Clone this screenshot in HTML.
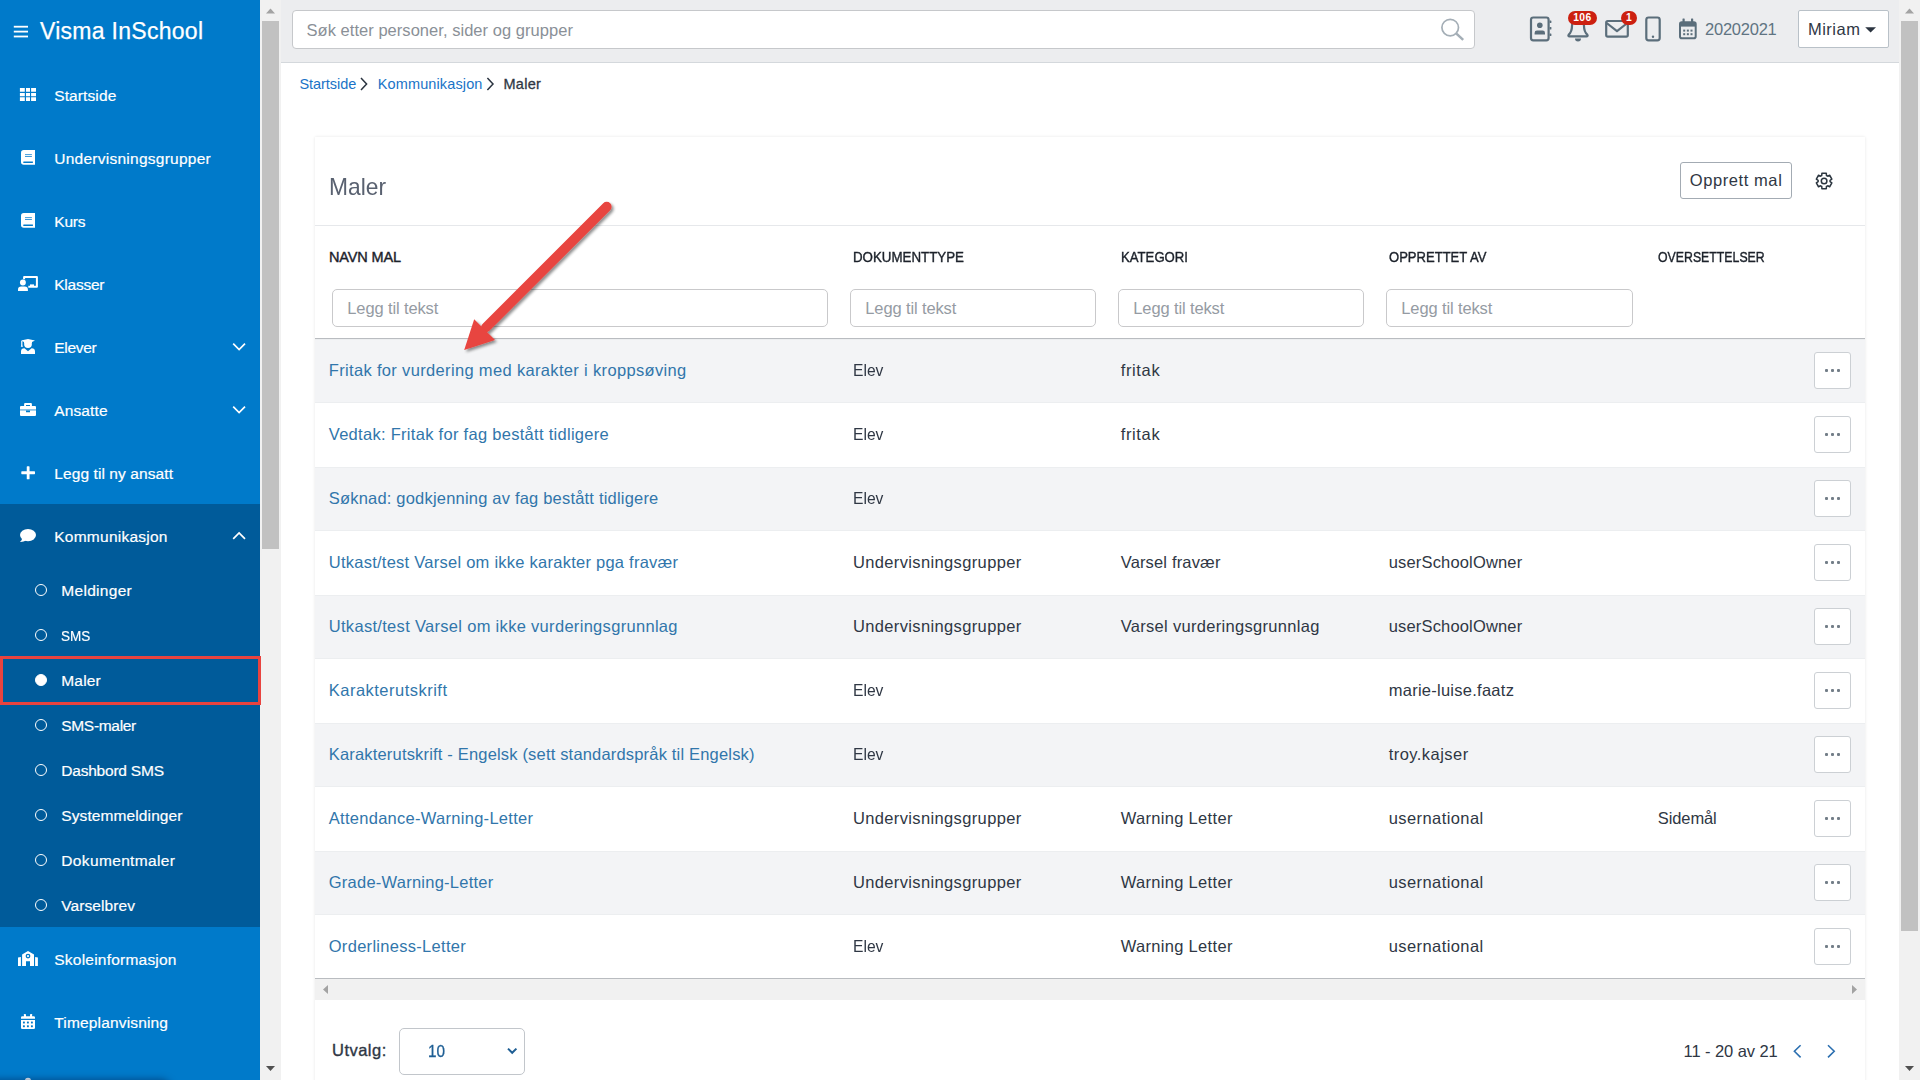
<!DOCTYPE html>
<html><head><meta charset="utf-8"><title>Maler</title>
<style>
*{box-sizing:border-box;margin:0;padding:0}
html,body{width:1920px;height:1080px;overflow:hidden;background:#fff;font-family:"Liberation Sans",sans-serif;color:#282f3a}
.t{position:absolute;white-space:pre;font-family:"Liberation Sans",sans-serif}
.a{position:absolute}
#side{position:absolute;left:0;top:0;width:260px;height:1080px;background:#007aca}
#dark{position:absolute;left:0;top:504px;width:260px;height:423px;background:#005b9a}
#hl{z-index:5;position:absolute;left:0;top:656px;width:261px;height:49px;border:3px solid #e8433f}
.dot{position:absolute;left:35.3px;width:12px;height:12px;border:1.9px solid #fff;border-radius:50%}
.track{position:absolute;background:#f1f1f1}
.thumb{position:absolute;background:#c1c1c1}
#top{position:absolute;left:281px;top:0;width:1618px;height:63px;background:#ecedef;border-bottom:1px solid #d4d8dc}
#search{position:absolute;left:292px;top:10px;width:1183px;height:38.5px;background:#fff;border:1px solid #c6c8cb;border-radius:4px}
#user{position:absolute;left:1797.5px;top:10px;width:91.5px;height:37.5px;background:#fff;border:1px solid #b9c1c8;border-radius:2px}
.badge{position:absolute;top:10.5px;height:14.5px;background:#cc2010;border-radius:8px}
#card{position:absolute;left:315px;top:137px;width:1550px;height:960px;background:#fff;box-shadow:0 0 3px rgba(0,0,0,.10)}
#hdiv{position:absolute;left:315px;top:225px;width:1550px;height:1px;background:#e6e8eb}
#thb{position:absolute;left:315px;top:338px;width:1550px;height:1px;background:#b9bcc0}
#tbb{position:absolute;left:315px;top:978px;width:1550px;height:1px;background:#b9bcc0}
.fi{position:absolute;top:289px;height:38px;border:1px solid #c9c9cb;border-radius:5px;background:#fff}
.row{position:absolute;left:315px;width:1550px;height:64px}
.g{background:#f3f4f6;border-top:1px solid #eceef0;border-bottom:1px solid #eceef0}
.btn{position:absolute;left:1814px;width:37px;height:37px;border:1px solid #ccd0d4;border-radius:3px;background:#fff}
.btn i{position:absolute;top:16.1px;width:3.1px;height:3.1px;background:#737e88;border-radius:1px}
#crt{position:absolute;left:1680px;top:162px;width:112px;height:37px;border:1px solid #a3abb3;border-radius:3px;background:#fff}
#sel{position:absolute;left:399px;top:1028px;width:126px;height:47px;border:1px solid #c2c6cb;border-radius:5px;background:#fff}
#wrap{position:relative;width:1920px;height:1080px;overflow:hidden;background:#fff}
</style></head><body><div id="wrap">
<div id="side"></div><div id="dark"></div><div id="hl"></div>
<svg class="a" style="left:0;top:0" width="260" height="1080"><rect x="13.8" y="25.8" width="14.2" height="1.8" fill="#fff"/><rect x="13.8" y="30.700000000000003" width="14.2" height="1.8" fill="#fff"/><rect x="13.8" y="35.6" width="14.2" height="1.8" fill="#fff"/><rect x="19.9" y="88" width="4.9" height="3.75" fill="#fff"/><rect x="19.9" y="93" width="4.9" height="3.25" fill="#fff"/><rect x="19.9" y="97.25" width="4.9" height="3.75" fill="#fff"/><rect x="26" y="88" width="4" height="3.75" fill="#fff"/><rect x="26" y="93" width="4" height="3.25" fill="#fff"/><rect x="26" y="97.25" width="4" height="3.75" fill="#fff"/><rect x="31.1" y="88" width="4.9" height="3.75" fill="#fff"/><rect x="31.1" y="93" width="4.9" height="3.25" fill="#fff"/><rect x="31.1" y="97.25" width="4.9" height="3.75" fill="#fff"/><path d="M23.8 150.1 H35 V164.79999999999998 H23.8 A2.8 2.8 0 0 1 21 162.0 V152.9 A2.8 2.8 0 0 1 23.8 150.1 Z" fill="#fff"/><rect x="25" y="154.2" width="6.9" height="0.9" fill="#2a8fd6"/><rect x="25" y="156.1" width="6.9" height="0.9" fill="#2a8fd6"/><path d="M23.9 161.4 H32.9 V163.0 H23.9 A0.8 0.8 0 0 1 23.9 161.4Z" fill="#007aca"/><path d="M23.8 213.1 H35 V227.79999999999998 H23.8 A2.8 2.8 0 0 1 21 225.0 V215.9 A2.8 2.8 0 0 1 23.8 213.1 Z" fill="#fff"/><rect x="25" y="217.2" width="6.9" height="0.9" fill="#2a8fd6"/><rect x="25" y="219.1" width="6.9" height="0.9" fill="#2a8fd6"/><path d="M23.9 224.4 H32.9 V226.0 H23.9 A0.8 0.8 0 0 1 23.9 224.4Z" fill="#007aca"/><path d="M24.1 279.2 V277.1 H36.9 V286.8 H28.3" fill="none" stroke="#fff" stroke-width="2" stroke-linejoin="round"/><rect x="30" y="284.4" width="4" height="2" fill="#fff"/><circle cx="22.9" cy="282.5" r="2.95" fill="#fff"/><path d="M18 290.9 V289.6 A3.2 3.2 0 0 1 21.2 286.4 H24.7 A3.2 3.2 0 0 1 27.9 289.6 V290.9 Z" fill="#fff"/><path d="M28 339 L35 340.6 L32 342 V343 H24 V342 L21 340.6 Z" fill="#fff"/><circle cx="28" cy="344" r="3.9" fill="#fff"/><path d="M21.2 341 H22.4 V345.2 L23 346.8 H20.8 L21.2 345.2Z" fill="#fff"/><path d="M21 354 V351.5 A3.4 3.4 0 0 1 24.4 348.2 L28 351.2 L31.6 348.2 A3.4 3.4 0 0 1 35 351.5 V354 Z" fill="#fff"/><path d="M20 407 A1 1 0 0 1 21 406 H24.1 V404.1 A1 1 0 0 1 25.1 403.1 H30.9 A1 1 0 0 1 31.9 404.1 V406 H35 A1 1 0 0 1 36 407 V409.2 H20 Z M26 406 H30 V405 H26 Z" fill="#fff" fill-rule="evenodd"/><rect x="20" y="409.2" width="16" height="1.4" fill="#fff" opacity=".5"/><path d="M20 410.6 H26 V412.2 H30 V410.6 H36 V414.9 A1 1 0 0 1 35 415.9 H21 A1 1 0 0 1 20 414.9 Z" fill="#fff"/><rect x="21.3" y="471.35" width="13.7" height="2.8" rx=".6" fill="#fff"/><rect x="26.75" y="466.3" width="2.8" height="13" rx=".6" fill="#fff"/><ellipse cx="28" cy="535.1" rx="8" ry="6.1" fill="#fff"/><path d="M22.2 538 C22 540 21 541.3 19.9 541.9 C22.5 542 24.5 541.3 26 540.3 Z" fill="#fff"/><path d="M233.2 343.7 L239.1 349.6 L245 343.7" fill="none" stroke="#fff" stroke-width="1.7"/><path d="M233.2 406.7 L239.1 412.6 L245 406.7" fill="none" stroke="#fff" stroke-width="1.7"/><path d="M233.2 538.8 L239.1 532.9 L245 538.8" fill="none" stroke="#fff" stroke-width="1.7"/><path d="M18 957.6 L20.9 957.1 V966 H18 Z" fill="#fff"/><path d="M37.9 957.6 L35.1 957.1 V966 H37.9 Z" fill="#fff"/><path d="M28 951 L34 954.6 V966 H30 V961.3 H26 V966 H22.1 V954.6 Z" fill="#fff"/><circle cx="28" cy="956.1" r="1.75" fill="#fff" stroke="#007aca" stroke-width="1.3"/><rect x="23.9" y="1014.1" width="2.1" height="3" rx=".4" fill="#fff"/><rect x="30" y="1014.1" width="2.1" height="3" rx=".4" fill="#fff"/><path d="M21 1018.8 V1017.5 A1.3 1.3 0 0 1 22.3 1016.2 H33.7 A1.3 1.3 0 0 1 35 1017.5 V1018.8 Z" fill="#fff"/><path d="M21 1020 H35 V1027.7 A1.3 1.3 0 0 1 33.7 1029 H22.3 A1.3 1.3 0 0 1 21 1027.7 Z" fill="#fff"/><rect x="22.95" y="1021.55" width="1.9" height="1.9" rx=".4" fill="#007aca"/><rect x="22.95" y="1025.35" width="1.9" height="1.9" rx=".4" fill="#007aca"/><rect x="26.95" y="1021.55" width="1.9" height="1.9" rx=".4" fill="#007aca"/><rect x="26.95" y="1025.35" width="1.9" height="1.9" rx=".4" fill="#007aca"/><rect x="30.95" y="1021.55" width="1.9" height="1.9" rx=".4" fill="#007aca"/><rect x="30.95" y="1025.35" width="1.9" height="1.9" rx=".4" fill="#007aca"/><circle cx="28" cy="1081" r="3.2" fill="#fff"/></svg>
<div class="a" style="left:0;top:0;width:260px;height:1080px;overflow:hidden"><div class="a" style="left:-20px;top:1081px;width:190px;height:12px;border-radius:0 10px 0 0;box-shadow:0 0 7px 2px rgba(0,40,90,.55)"></div></div>
<!-- sub dots -->
<div class="dot" style="top:583.5px"></div><div class="dot" style="top:628.5px"></div>
<div class="dot" style="top:673.5px;background:#fff"></div><div class="dot" style="top:718.5px"></div>
<div class="dot" style="top:763.5px"></div><div class="dot" style="top:808.5px"></div>
<div class="dot" style="top:853.5px"></div><div class="dot" style="top:898.5px"></div>
<!-- scrollbars -->
<div class="track" style="left:260px;top:0;width:21px;height:1080px"></div>
<div class="thumb" style="left:262px;top:21px;width:17px;height:528px"></div>
<div class="track" style="left:1899px;top:0;width:21px;height:1080px"></div>
<div class="thumb" style="left:1901px;top:21px;width:17px;height:910px"></div>
<svg class="a" style="left:260px;top:0" width="21" height="1080"><path d="M6 13.5h9l-4.5-5z" fill="#a3a3a3"/><path d="M6 1066h9l-4.5 5z" fill="#505050"/></svg>
<svg class="a" style="left:1899px;top:0" width="21" height="1080"><path d="M6 13.5h9l-4.5-5z" fill="#a3a3a3"/><path d="M6 1066h9l-4.5 5z" fill="#505050"/></svg>
<div id="top"></div><div id="search"></div><div id="user"></div>
<div id="card"></div><div id="hdiv"></div>
<div id="crt"></div>
<!-- rows -->
<div class="row g" style="top:338.5px"></div><div class="row g" style="top:466.5px"></div><div class="row g" style="top:594.5px"></div><div class="row g" style="top:722.5px"></div><div class="row g" style="top:850.5px"></div>
<div id="thb"></div><div id="tbb"></div>
<div class="track" style="left:315px;top:979px;width:1550px;height:21px"></div>
<svg class="a" style="left:315px;top:979px" width="1550" height="21"><path d="M13 6v9l-5-4.5z" fill="#a3a3a3"/><path d="M1537 6v9l5-4.5z" fill="#a3a3a3"/></svg>
<div class="fi" style="left:332px;width:496px"></div><div class="fi" style="left:850px;width:246px"></div><div class="fi" style="left:1118px;width:246px"></div><div class="fi" style="left:1386px;width:247px"></div>
<div class="btn" style="top:352px"><i style="left:9.5px"></i><i style="left:15.5px"></i><i style="left:21.5px"></i></div>
<div class="btn" style="top:416px"><i style="left:9.5px"></i><i style="left:15.5px"></i><i style="left:21.5px"></i></div>
<div class="btn" style="top:480px"><i style="left:9.5px"></i><i style="left:15.5px"></i><i style="left:21.5px"></i></div>
<div class="btn" style="top:544px"><i style="left:9.5px"></i><i style="left:15.5px"></i><i style="left:21.5px"></i></div>
<div class="btn" style="top:608px"><i style="left:9.5px"></i><i style="left:15.5px"></i><i style="left:21.5px"></i></div>
<div class="btn" style="top:672px"><i style="left:9.5px"></i><i style="left:15.5px"></i><i style="left:21.5px"></i></div>
<div class="btn" style="top:736px"><i style="left:9.5px"></i><i style="left:15.5px"></i><i style="left:21.5px"></i></div>
<div class="btn" style="top:800px"><i style="left:9.5px"></i><i style="left:15.5px"></i><i style="left:21.5px"></i></div>
<div class="btn" style="top:864px"><i style="left:9.5px"></i><i style="left:15.5px"></i><i style="left:21.5px"></i></div>
<div class="btn" style="top:928px"><i style="left:9.5px"></i><i style="left:15.5px"></i><i style="left:21.5px"></i></div>

<div id="sel"></div>
<svg class="a" style="left:0;top:0" width="1920" height="100"><rect x="1531" y="17.5" width="17.6" height="22.8" rx="2.3" fill="none" stroke="#5b6e7b" stroke-width="2.2"/><rect x="1549.6" y="20.4" width="1.8" height="2.6" rx=".6" fill="#5b6e7b"/><rect x="1549.6" y="26.9" width="1.8" height="2.6" rx=".6" fill="#5b6e7b"/><rect x="1549.6" y="33.4" width="1.8" height="2.6" rx=".6" fill="#5b6e7b"/><circle cx="1539.8" cy="25.3" r="2.8" fill="#5b6e7b"/><path d="M1534.6 34.6 V33 A2.4 2.4 0 0 1 1537 30.6 H1542.6 A2.4 2.4 0 0 1 1545 33 V34.6 Z" fill="#5b6e7b"/><path d="M1578 18.2 C1573.4 18.2 1572 22 1572 26 C1572 31 1570 33.5 1568.6 34.8 C1568 35.6 1568.6 36.4 1569.4 36.4 H1586.6 C1587.4 36.4 1588 35.6 1587.4 34.8 C1586 33.5 1584 31 1584 26 C1584 22 1582.6 18.2 1578 18.2 Z" fill="none" stroke="#5b6e7b" stroke-width="2.2" stroke-linejoin="round"/><path d="M1575 38.6 H1581 A3 3 0 0 1 1575 38.6Z" fill="#5b6e7b"/><rect x="1606.2" y="21" width="21.6" height="15.6" rx="1.6" fill="none" stroke="#5b6e7b" stroke-width="2.2"/><path d="M1606.6 23 L1617 31.2 L1627.4 23" fill="none" stroke="#5b6e7b" stroke-width="2.2" stroke-linejoin="round"/><rect x="1646.3" y="17.5" width="13.4" height="22.8" rx="2.3" fill="none" stroke="#5b6e7b" stroke-width="2.2"/><circle cx="1653" cy="36.7" r="1.2" fill="#5b6e7b"/><rect x="1682.5" y="18.4" width="2.2" height="4" rx=".5" fill="#5b6e7b"/><rect x="1691" y="18.4" width="2.2" height="4" rx=".5" fill="#5b6e7b"/><rect x="1680" y="22.2" width="15.7" height="16" rx="1.8" fill="none" stroke="#5b6e7b" stroke-width="2"/><rect x="1680" y="22.2" width="15.7" height="4.4" fill="#5b6e7b"/><rect x="1683.2" y="29.6" width="2" height="2" fill="#5b6e7b"/><rect x="1683.2" y="33.2" width="2" height="2" fill="#5b6e7b"/><rect x="1686.85" y="29.6" width="2" height="2" fill="#5b6e7b"/><rect x="1686.85" y="33.2" width="2" height="2" fill="#5b6e7b"/><rect x="1690.5" y="29.6" width="2" height="2" fill="#5b6e7b"/><rect x="1690.5" y="33.2" width="2" height="2" fill="#5b6e7b"/><circle cx="1450.2" cy="27.6" r="8.3" fill="none" stroke="#a4aeb6" stroke-width="1.7"/><path d="M1456.4 33.6 L1463.2 39.9" stroke="#a4aeb6" stroke-width="2.5" stroke-linecap="butt"/><path d="M1865.2 27.2 H1876 L1870.6 32.6 Z" fill="#2b3440"/><path d="M361 78 L366.6 84 L361 90" fill="none" stroke="#2b3440" stroke-width="1.5"/><path d="M487.4 78 L493.0 84 L487.4 90" fill="none" stroke="#2b3440" stroke-width="1.5"/></svg>
<svg class="a" style="left:0;top:0" width="1920" height="1080"><path d="M1826.44 175.48 L1826.31 173.31 L1821.89 173.31 L1821.76 175.48 L1820.49 176.21 L1818.54 175.25 L1816.34 179.06 L1818.14 180.27 L1818.14 181.73 L1816.34 182.94 L1818.54 186.75 L1820.49 185.79 L1821.76 186.52 L1821.89 188.69 L1826.31 188.69 L1826.44 186.52 L1827.71 185.79 L1829.66 186.75 L1831.86 182.94 L1830.06 181.73 L1830.06 180.27 L1831.86 179.06 L1829.66 175.25 L1827.71 176.21Z" fill="none" stroke="#2c3640" stroke-width="1.5" stroke-linejoin="round"/><circle cx="1824.1" cy="181" r="2.8" fill="none" stroke="#2c3640" stroke-width="1.5"/><path d="M508 1048.6 L512.2 1052.8 L516.4 1048.6" fill="none" stroke="#1e5e94" stroke-width="2"/><path d="M1800.6 1045.2 L1794.4 1051.3 L1800.6 1057.4" fill="none" stroke="#2b6fb0" stroke-width="1.6"/><path d="M1828 1045.2 L1834.2 1051.3 L1828 1057.4" fill="none" stroke="#2b6fb0" stroke-width="1.6"/></svg>
<div class="badge" style="left:1567.5px;width:29.5px"></div><div class="badge" style="left:1620.5px;width:16.5px"></div>
<span class="t" style="left:40.00px;top:20.03px;font-size:23px;line-height:23px;color:#fff;letter-spacing:0.278px;-webkit-text-stroke:.25px #fff">Visma InSchool</span>
<span class="t" style="left:54.25px;top:87.63px;font-size:15.5px;line-height:15.5px;color:#fff;letter-spacing:0.104px;-webkit-text-stroke:.2px #fff">Startside</span>
<span class="t" style="left:54.25px;top:150.63px;font-size:15.5px;line-height:15.5px;color:#fff;letter-spacing:0.256px;-webkit-text-stroke:.2px #fff">Undervisningsgrupper</span>
<span class="t" style="left:54.25px;top:213.63px;font-size:15.5px;line-height:15.5px;color:#fff;letter-spacing:-0.208px;-webkit-text-stroke:.2px #fff">Kurs</span>
<span class="t" style="left:54.25px;top:276.63px;font-size:15.5px;line-height:15.5px;color:#fff;letter-spacing:-0.240px;-webkit-text-stroke:.2px #fff">Klasser</span>
<span class="t" style="left:54.25px;top:339.63px;font-size:15.5px;line-height:15.5px;color:#fff;letter-spacing:-0.287px;-webkit-text-stroke:.2px #fff">Elever</span>
<span class="t" style="left:54.25px;top:402.63px;font-size:15.5px;line-height:15.5px;color:#fff;letter-spacing:0.115px;-webkit-text-stroke:.2px #fff">Ansatte</span>
<span class="t" style="left:54.25px;top:465.63px;font-size:15.5px;line-height:15.5px;color:#fff;letter-spacing:0.091px;-webkit-text-stroke:.2px #fff">Legg til ny ansatt</span>
<span class="t" style="left:54.25px;top:528.63px;font-size:15.5px;line-height:15.5px;color:#fff;letter-spacing:0.247px;-webkit-text-stroke:.2px #fff">Kommunikasjon</span>
<span class="t" style="left:54.25px;top:951.63px;font-size:15.5px;line-height:15.5px;color:#fff;letter-spacing:0.223px;-webkit-text-stroke:.2px #fff">Skoleinformasjon</span>
<span class="t" style="left:54.25px;top:1014.63px;font-size:15.5px;line-height:15.5px;color:#fff;letter-spacing:0.166px;-webkit-text-stroke:.2px #fff">Timeplanvisning</span>
<span class="t" style="left:61.25px;top:583.13px;font-size:15.5px;line-height:15.5px;color:#fff;letter-spacing:0.305px;-webkit-text-stroke:.2px #fff">Meldinger</span>
<span class="t" style="left:61.25px;top:628.13px;font-size:15.5px;line-height:15.5px;color:#fff;letter-spacing:0.000px;-webkit-text-stroke:.2px #fff;transform:scaleX(0.8707);transform-origin:0 0">SMS</span>
<span class="t" style="left:61.25px;top:673.13px;font-size:15.5px;line-height:15.5px;color:#fff;letter-spacing:0.184px;-webkit-text-stroke:.2px #fff">Maler</span>
<span class="t" style="left:61.25px;top:718.13px;font-size:15.5px;line-height:15.5px;color:#fff;letter-spacing:-0.314px;-webkit-text-stroke:.2px #fff">SMS-maler</span>
<span class="t" style="left:61.25px;top:763.13px;font-size:15.5px;line-height:15.5px;color:#fff;letter-spacing:-0.214px;-webkit-text-stroke:.2px #fff">Dashbord SMS</span>
<span class="t" style="left:61.25px;top:808.13px;font-size:15.5px;line-height:15.5px;color:#fff;letter-spacing:0.107px;-webkit-text-stroke:.2px #fff">Systemmeldinger</span>
<span class="t" style="left:61.25px;top:853.13px;font-size:15.5px;line-height:15.5px;color:#fff;letter-spacing:0.362px;-webkit-text-stroke:.2px #fff">Dokumentmaler</span>
<span class="t" style="left:61.25px;top:898.13px;font-size:15.5px;line-height:15.5px;color:#fff;letter-spacing:0.090px;-webkit-text-stroke:.2px #fff">Varselbrev</span>
<span class="t" style="left:306.50px;top:22.03px;font-size:16.5px;line-height:16.5px;color:#8a9097;letter-spacing:0.038px;">Søk etter personer, sider og grupper</span>
<span class="t" style="left:1705.00px;top:21.03px;font-size:16.5px;line-height:16.5px;color:#5f7482;letter-spacing:-0.232px;">20202021</span>
<span class="t" style="left:1807.90px;top:20.83px;font-size:16.5px;line-height:16.5px;color:#2f3744;letter-spacing:0.500px;">Miriam</span>
<span class="t" style="left:299.40px;top:76.53px;font-size:14.5px;line-height:14.5px;color:#1a73c7;letter-spacing:-0.029px;">Startside</span>
<span class="t" style="left:377.80px;top:76.53px;font-size:14.5px;line-height:14.5px;color:#1a73c7;letter-spacing:0.119px;">Kommunikasjon</span>
<span class="t" style="left:503.40px;top:76.53px;font-size:14.5px;line-height:14.5px;color:#2f3744;letter-spacing:0.309px;-webkit-text-stroke:.3px #2f3744">Maler</span>
<span class="t" style="left:329.00px;top:174.68px;font-size:24px;line-height:24px;color:#596170;letter-spacing:0.000px;;transform:scaleX(0.9498);transform-origin:0 0">Maler</span>
<span class="t" style="left:1689.80px;top:171.73px;font-size:16.5px;line-height:16.5px;color:#2f3744;letter-spacing:0.580px;">Opprett mal</span>
<span class="t" style="left:329.00px;top:249.73px;font-size:14.5px;line-height:14.5px;color:#1c222b;letter-spacing:-0.152px;-webkit-text-stroke:.4px #1c222b">NAVN MAL</span>
<span class="t" style="left:853.00px;top:249.73px;font-size:14.5px;line-height:14.5px;color:#1c222b;letter-spacing:0.000px;-webkit-text-stroke:.4px #1c222b;transform:scaleX(0.9185);transform-origin:0 0">DOKUMENTTYPE</span>
<span class="t" style="left:1121.00px;top:249.73px;font-size:14.5px;line-height:14.5px;color:#1c222b;letter-spacing:0.000px;-webkit-text-stroke:.4px #1c222b;transform:scaleX(0.9071);transform-origin:0 0">KATEGORI</span>
<span class="t" style="left:1388.80px;top:249.73px;font-size:14.5px;line-height:14.5px;color:#1c222b;letter-spacing:0.000px;-webkit-text-stroke:.4px #1c222b;transform:scaleX(0.8998);transform-origin:0 0">OPPRETTET AV</span>
<span class="t" style="left:1657.80px;top:249.73px;font-size:14.5px;line-height:14.5px;color:#1c222b;letter-spacing:0.000px;-webkit-text-stroke:.4px #1c222b;transform:scaleX(0.8488);transform-origin:0 0">OVERSETTELSER</span>
<span class="t" style="left:347.30px;top:299.73px;font-size:16.5px;line-height:16.5px;color:#959ba3;letter-spacing:-0.126px;">Legg til tekst</span>
<span class="t" style="left:865.30px;top:299.73px;font-size:16.5px;line-height:16.5px;color:#959ba3;letter-spacing:-0.126px;">Legg til tekst</span>
<span class="t" style="left:1133.30px;top:299.73px;font-size:16.5px;line-height:16.5px;color:#959ba3;letter-spacing:-0.126px;">Legg til tekst</span>
<span class="t" style="left:1401.30px;top:299.73px;font-size:16.5px;line-height:16.5px;color:#959ba3;letter-spacing:-0.126px;">Legg til tekst</span>
<span class="t" style="left:328.75px;top:362.13px;font-size:16.5px;line-height:16.5px;color:#3176ab;letter-spacing:0.336px;">Fritak for vurdering med karakter i kroppsøving</span>
<span class="t" style="left:852.90px;top:362.13px;font-size:16.5px;line-height:16.5px;color:#2f3744;letter-spacing:0.000px;;transform:scaleX(0.9468);transform-origin:0 0">Elev</span>
<span class="t" style="left:1120.70px;top:362.13px;font-size:16.5px;line-height:16.5px;color:#2f3744;letter-spacing:0.647px;">fritak</span>
<span class="t" style="left:328.75px;top:426.13px;font-size:16.5px;line-height:16.5px;color:#3176ab;letter-spacing:0.289px;">Vedtak: Fritak for fag bestått tidligere</span>
<span class="t" style="left:852.90px;top:426.13px;font-size:16.5px;line-height:16.5px;color:#2f3744;letter-spacing:0.000px;;transform:scaleX(0.9468);transform-origin:0 0">Elev</span>
<span class="t" style="left:1120.70px;top:426.13px;font-size:16.5px;line-height:16.5px;color:#2f3744;letter-spacing:0.647px;">fritak</span>
<span class="t" style="left:328.75px;top:490.13px;font-size:16.5px;line-height:16.5px;color:#3176ab;letter-spacing:0.197px;">Søknad: godkjenning av fag bestått tidligere</span>
<span class="t" style="left:852.90px;top:490.13px;font-size:16.5px;line-height:16.5px;color:#2f3744;letter-spacing:0.000px;;transform:scaleX(0.9468);transform-origin:0 0">Elev</span>
<span class="t" style="left:328.75px;top:554.13px;font-size:16.5px;line-height:16.5px;color:#3176ab;letter-spacing:0.249px;">Utkast/test Varsel om ikke karakter pga fravær</span>
<span class="t" style="left:852.90px;top:554.13px;font-size:16.5px;line-height:16.5px;color:#2f3744;letter-spacing:0.366px;">Undervisningsgrupper</span>
<span class="t" style="left:1120.70px;top:554.13px;font-size:16.5px;line-height:16.5px;color:#2f3744;letter-spacing:0.157px;">Varsel fravær</span>
<span class="t" style="left:1388.70px;top:554.13px;font-size:16.5px;line-height:16.5px;color:#2f3744;letter-spacing:0.167px;">userSchoolOwner</span>
<span class="t" style="left:328.75px;top:618.13px;font-size:16.5px;line-height:16.5px;color:#3176ab;letter-spacing:0.305px;">Utkast/test Varsel om ikke vurderingsgrunnlag</span>
<span class="t" style="left:852.90px;top:618.13px;font-size:16.5px;line-height:16.5px;color:#2f3744;letter-spacing:0.366px;">Undervisningsgrupper</span>
<span class="t" style="left:1120.70px;top:618.13px;font-size:16.5px;line-height:16.5px;color:#2f3744;letter-spacing:0.305px;">Varsel vurderingsgrunnlag</span>
<span class="t" style="left:1388.70px;top:618.13px;font-size:16.5px;line-height:16.5px;color:#2f3744;letter-spacing:0.167px;">userSchoolOwner</span>
<span class="t" style="left:328.75px;top:682.13px;font-size:16.5px;line-height:16.5px;color:#3176ab;letter-spacing:0.486px;">Karakterutskrift</span>
<span class="t" style="left:852.90px;top:682.13px;font-size:16.5px;line-height:16.5px;color:#2f3744;letter-spacing:0.000px;;transform:scaleX(0.9468);transform-origin:0 0">Elev</span>
<span class="t" style="left:1388.70px;top:682.13px;font-size:16.5px;line-height:16.5px;color:#2f3744;letter-spacing:0.260px;">marie-luise.faatz</span>
<span class="t" style="left:328.75px;top:746.13px;font-size:16.5px;line-height:16.5px;color:#3176ab;letter-spacing:0.178px;">Karakterutskrift - Engelsk (sett standardspråk til Engelsk)</span>
<span class="t" style="left:852.90px;top:746.13px;font-size:16.5px;line-height:16.5px;color:#2f3744;letter-spacing:0.000px;;transform:scaleX(0.9468);transform-origin:0 0">Elev</span>
<span class="t" style="left:1388.70px;top:746.13px;font-size:16.5px;line-height:16.5px;color:#2f3744;letter-spacing:0.461px;">troy.kajser</span>
<span class="t" style="left:328.75px;top:810.13px;font-size:16.5px;line-height:16.5px;color:#3176ab;letter-spacing:0.281px;">Attendance-Warning-Letter</span>
<span class="t" style="left:852.90px;top:810.13px;font-size:16.5px;line-height:16.5px;color:#2f3744;letter-spacing:0.366px;">Undervisningsgrupper</span>
<span class="t" style="left:1120.70px;top:810.13px;font-size:16.5px;line-height:16.5px;color:#2f3744;letter-spacing:0.315px;">Warning Letter</span>
<span class="t" style="left:1388.70px;top:810.13px;font-size:16.5px;line-height:16.5px;color:#2f3744;letter-spacing:0.418px;">usernational</span>
<span class="t" style="left:1657.80px;top:810.13px;font-size:16.5px;line-height:16.5px;color:#2f3744;letter-spacing:-0.104px;">Sidemål</span>
<span class="t" style="left:328.75px;top:874.13px;font-size:16.5px;line-height:16.5px;color:#3176ab;letter-spacing:0.243px;">Grade-Warning-Letter</span>
<span class="t" style="left:852.90px;top:874.13px;font-size:16.5px;line-height:16.5px;color:#2f3744;letter-spacing:0.366px;">Undervisningsgrupper</span>
<span class="t" style="left:1120.70px;top:874.13px;font-size:16.5px;line-height:16.5px;color:#2f3744;letter-spacing:0.315px;">Warning Letter</span>
<span class="t" style="left:1388.70px;top:874.13px;font-size:16.5px;line-height:16.5px;color:#2f3744;letter-spacing:0.418px;">usernational</span>
<span class="t" style="left:328.75px;top:938.13px;font-size:16.5px;line-height:16.5px;color:#3176ab;letter-spacing:0.290px;">Orderliness-Letter</span>
<span class="t" style="left:852.90px;top:938.13px;font-size:16.5px;line-height:16.5px;color:#2f3744;letter-spacing:0.000px;;transform:scaleX(0.9468);transform-origin:0 0">Elev</span>
<span class="t" style="left:1120.70px;top:938.13px;font-size:16.5px;line-height:16.5px;color:#2f3744;letter-spacing:0.315px;">Warning Letter</span>
<span class="t" style="left:1388.70px;top:938.13px;font-size:16.5px;line-height:16.5px;color:#2f3744;letter-spacing:0.418px;">usernational</span>
<span class="t" style="left:332.00px;top:1041.53px;font-size:16.5px;line-height:16.5px;color:#2f3744;letter-spacing:0.482px;-webkit-text-stroke:.35px #2f3744">Utvalg:</span>
<span class="t" style="left:428.00px;top:1043.03px;font-size:16.5px;line-height:16.5px;color:#1e5e94;letter-spacing:0.000px;-webkit-text-stroke:.3px #1e5e94;transform:scaleX(0.9260);transform-origin:0 0">10</span>
<span class="t" style="left:1683.60px;top:1043.03px;font-size:16.5px;line-height:16.5px;color:#2f3744;letter-spacing:-0.074px;">11 - 20 av 21</span>
<span class="t" style="left:1573.20px;top:13.08px;font-size:10.3px;line-height:10.3px;color:#fff;letter-spacing:0.406px;font-weight:bold">106</span>
<span class="t" style="left:1626.00px;top:13.08px;font-size:10.3px;line-height:10.3px;color:#fff;letter-spacing:-0.134px;font-weight:bold">1</span>
<svg class="a" style="left:430px;top:180px;overflow:visible" width="220" height="200" viewBox="430 180 220 200">
<defs><filter id="sh" x="-20%" y="-20%" width="150%" height="150%"><feGaussianBlur in="SourceAlpha" stdDeviation="1.6"/><feOffset dx="2.2" dy="2.2"/><feComponentTransfer><feFuncA type="linear" slope="0.45"/></feComponentTransfer><feMerge><feMergeNode/><feMergeNode in="SourceGraphic"/></feMerge></filter></defs>
<g filter="url(#sh)"><line x1="606.7" y1="206.7" x2="486" y2="327.4" stroke="#e8443f" stroke-width="9.8" stroke-linecap="round"/>
<path d="M464.2 350 L474.2 319.2 L495 340 Z" fill="#e8443f"/></g></svg>
</div></body></html>
